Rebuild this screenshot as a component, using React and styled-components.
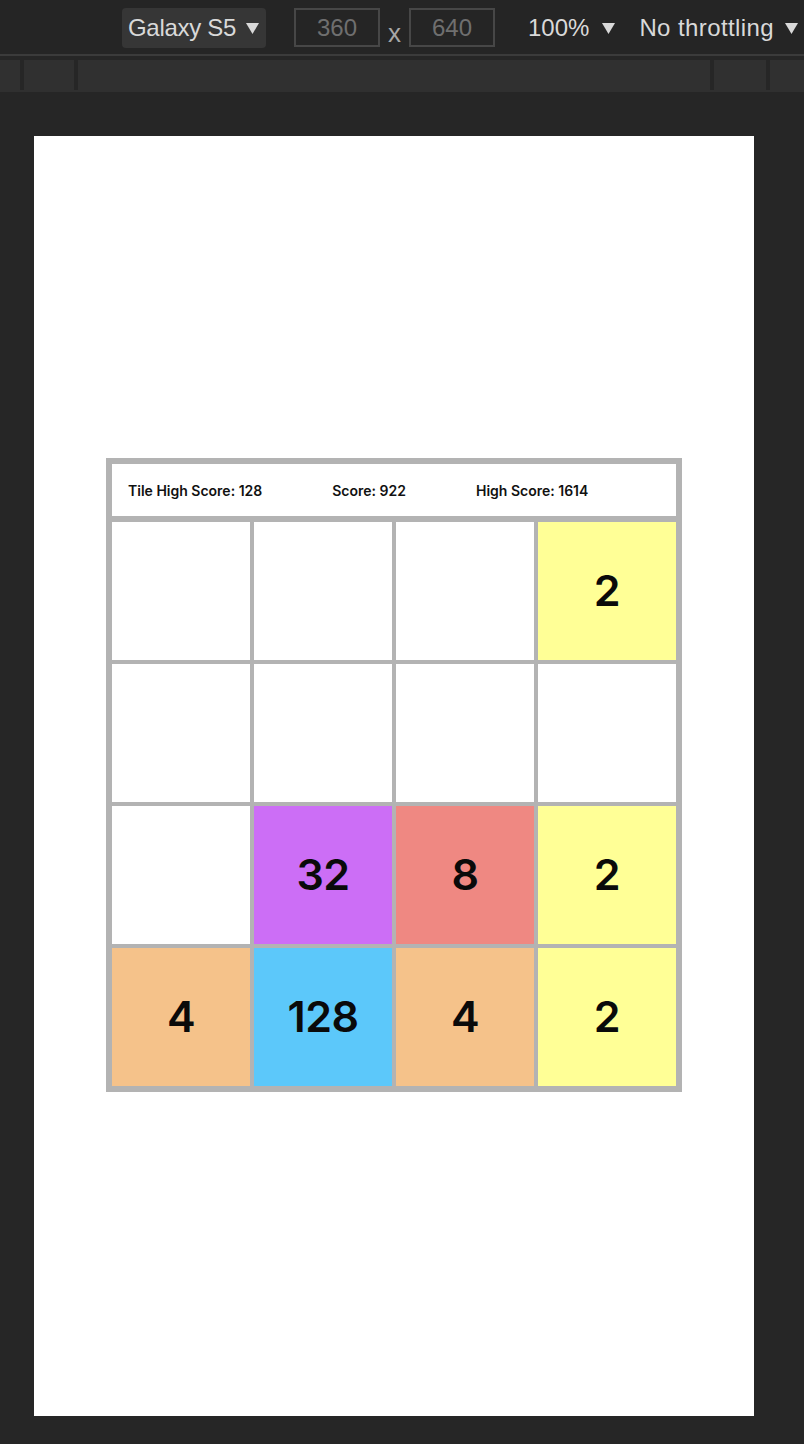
import React from 'react';
import styled, { createGlobalStyle } from 'styled-components';

const GlobalStyle = createGlobalStyle`
  html, body {
    margin: 0;
    padding: 0;
    background: #262626;
  }
  * {
    box-sizing: border-box;
  }
`;

const Page = styled.div`
  width: 804px;
  height: 1444px;
  background: #262626;
  display: flex;
  flex-direction: column;
  overflow: hidden;
`;

const TopBar = styled.div`
  height: 56px;
  display: flex;
  align-items: flex-start;
  padding: 8px 0 0 122px;
  background: #252525;
  border-bottom: 2px solid #3b3b3b;
  font-family: 'Liberation Sans', Arial, sans-serif;
  font-size: 24px;
  color: #d9d9d9;
`;

const DeviceButton = styled.div`
  width: 144px;
  height: 40px;
  display: flex;
  align-items: center;
  padding-left: 6px;
  gap: 10px;
  background: #363636;
  border-radius: 4px;
  letter-spacing: -0.3px;
`;

const SizeInput = styled.div`
  width: 86px;
  height: 39px;
  display: flex;
  align-items: center;
  justify-content: center;
  border: 2px solid #474747;
  color: #6f6f6f;
  margin-left: ${(p) => p.$ml || 0}px;
`;

const Times = styled.span`
  width: 29px;
  text-align: center;
  color: #a8a8a8;
  font-size: 26px;
  line-height: 1;
  align-self: center;
  margin-top: 4px;
`;

const Dropdown = styled.div`
  height: 40px;
  display: flex;
  align-items: center;
  gap: ${(p) => p.$gap}px;
  margin-left: ${(p) => p.$ml}px;
  letter-spacing: ${(p) => p.$ls}px;
`;

const Arrow = () => (
  <svg width="13" height="12" viewBox="0 0 13 12">
    <polygon points="0,1 13,1 6.5,12" fill="#d9d9d9" />
  </svg>
);

const TabStrip = styled.div`
  height: 32px;
  margin-top: 4px;
  display: flex;
  background: #303030;
`;

const TabCell = styled.div`
  width: ${(p) => (p.$w ? `${p.$w}px` : 'auto')};
  flex: ${(p) => (p.$w ? 'none' : 1)};
`;

const TabDivider = styled.div`
  width: 4px;
  height: 30px;
  background: #262626;
`;

const Stage = styled.div`
  flex: 1;
  padding: 44px 50px 28px 34px;
  display: flex;
`;

const Screen = styled.div`
  flex: 1;
  background: #fff;
  display: flex;
  align-items: center;
  justify-content: center;
  padding-bottom: 2px;
`;

const Board = styled.div`
  width: 576px;
  padding: 6px;
  background: #b3b3b3;
  display: flex;
  flex-direction: column;
  gap: 6px;
`;

const ScoreBar = styled.div`
  height: 52px;
  background: #fff;
  display: flex;
  align-items: center;
  gap: 70px;
  padding: 1px 0 0 16px;
  font-family: Inter, 'Noto Sans', sans-serif;
  font-weight: 600;
  font-size: 14px;
  color: #111;
`;

const Grid = styled.div`
  display: grid;
  grid-template-columns: repeat(4, 138px);
  grid-auto-rows: 138px;
  gap: 4px;
`;

const tileColors = {
  0: '#ffffff',
  2: '#ffff96',
  4: '#f5c28a',
  8: '#ef8882',
  32: '#cc6ef6',
  128: '#5cc8fa',
};

const Tile = styled.div`
  background: ${(p) => tileColors[p.$value] || '#ffffff'};
  display: flex;
  align-items: center;
  justify-content: center;
  padding-bottom: 3px;
  font-family: Inter, 'Noto Sans', sans-serif;
  font-weight: 600;
  font-size: 43px;
  letter-spacing: -0.5px;
  color: #0a0a0a;
`;

const board = [
  [0, 0, 0, 2],
  [0, 0, 0, 0],
  [0, 32, 8, 2],
  [4, 128, 4, 2],
];

export default function App() {
  return (
    <Page>
      <GlobalStyle />
      <TopBar>
        <DeviceButton>
          Galaxy S5 <Arrow />
        </DeviceButton>
        <SizeInput $ml={28}>360</SizeInput>
        <Times>x</Times>
        <SizeInput>640</SizeInput>
        <Dropdown $ml={33} $gap={13} $ls={0}>
          100% <Arrow />
        </Dropdown>
        <Dropdown $ml={24} $gap={11} $ls={0.4}>
          No throttling <Arrow />
        </Dropdown>
      </TopBar>
      <TabStrip>
        <TabCell $w={20} />
        <TabDivider />
        <TabCell $w={50} />
        <TabDivider />
        <TabCell />
        <TabDivider />
        <TabCell $w={52} />
        <TabDivider />
        <TabCell $w={34} />
      </TabStrip>
      <Stage>
        <Screen>
          <Board>
            <ScoreBar>
              <span>Tile High Score: 128</span>
              <span>Score: 922</span>
              <span>High Score: 1614</span>
            </ScoreBar>
            <Grid>
              {board.flat().map((v, i) => (
                <Tile key={i} $value={v}>
                  {v || ''}
                </Tile>
              ))}
            </Grid>
          </Board>
        </Screen>
      </Stage>
    </Page>
  );
}
